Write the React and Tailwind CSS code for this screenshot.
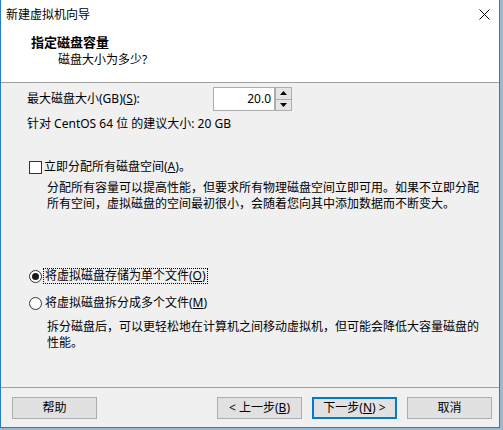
import React from "react"

const font = { fontFamily: '"Noto Sans", "Noto Sans CJK SC", sans-serif' }

function Button({ children, primary }) {
  return (
    <button
      className={
        primary
          ? "w-[85px] h-[22px] bg-[#e1e1e1] border-2 border-[#0078d7] text-[12px] leading-none text-black flex items-center justify-center"
          : "w-[85px] h-[22px] bg-[#e1e1e1] border border-[#adadad] text-[12px] leading-none text-black flex items-center justify-center"
      }
    >
      {children}
    </button>
  )
}

function Spinner() {
  return (
    <div className="flex flex-col w-[17px] h-[24px] border border-[#adadad] bg-white">
      <div className="flex-1 bg-[#e5e5e5] border-b border-[#adadad] flex items-center justify-center">
        <svg width="7" height="4" viewBox="0 0 7 4">
          <path d="M0 4 L3.5 0 L7 4 Z" fill="#000" />
        </svg>
      </div>
      <div className="flex-1 bg-[#e5e5e5] flex items-center justify-center">
        <svg width="7" height="4" viewBox="0 0 7 4">
          <path d="M0 0 L3.5 4 L7 0 Z" fill="#000" />
        </svg>
      </div>
    </div>
  )
}

export default function App() {
  return (
    <div className="w-[503px] h-[430px] bg-[#9db8cc] overflow-hidden" style={font}>
      <div className="w-[500px] h-[428px] bg-[#f0f0f0] border-x border-b border-[#1e7fd6] flex flex-col text-black">
        {/* title bar */}
        <div className="h-[30px] bg-white flex items-center justify-between pl-[5px] pr-[8px]">
          <span className="text-[12px] leading-4">新建虚拟机向导</span>
          <svg width="11" height="11" viewBox="0 0 11 11" className="mr-[1px] mb-[2px]">
            <path d="M0.5 0.5 L10.5 10.5 M10.5 0.5 L0.5 10.5" stroke="#000" strokeWidth="1" />
          </svg>
        </div>

        {/* header */}
        <div className="h-[53px] bg-white border-b border-[#a0a0a0] pt-[4px]">
          <div className="pl-[30px] text-[13px] leading-4 font-bold">指定磁盘容量</div>
          <div className="pl-[57px] mt-[2px] text-[12px] leading-4">磁盘大小为多少?</div>
        </div>

        {/* body */}
        <div className="flex-1 pl-[26px] text-[12px]">
          <div className="mt-[4px] flex items-center h-[24px]">
            <div className="w-[186px] leading-4">
              最大磁盘大小(GB)(<u>S</u>):
            </div>
            <div className="w-[62px] h-[24px] bg-white border border-[#adadad] flex items-center justify-end pr-[3px] leading-4">
              20.0
            </div>
            <Spinner />
          </div>

          <div className="mt-[5px] leading-4">针对 CentOS 64 位 的建议大小: 20 GB</div>

          <div className="mt-[27px] flex items-center h-4 ml-[2px]">
            <div className="w-[13px] h-[13px] bg-white border border-[#333]" />
            <span className="ml-[2px] leading-4">
              立即分配所有磁盘空间(<u>A</u>)。
            </span>
          </div>

          <div className="mt-[5px] ml-[20px] leading-4">
            分配所有容量可以提高性能，但要求所有物理磁盘空间立即可用。如果不立即分配
            <br />
            所有空间，虚拟磁盘的空间最初很小，会随着您向其中添加数据而不断变大。
          </div>

          <div className="mt-[56px] flex items-center h-4 ml-[2px]">
            <div className="w-[13px] h-[13px] rounded-full bg-white border border-[#333] flex items-center justify-center">
              <div className="w-[7px] h-[7px] rounded-full bg-[#1a1a1a]" />
            </div>
            <span className="ml-[1px] px-[1px] leading-[14px] border border-dotted border-black">
              将虚拟磁盘存储为单个文件(<u>O</u>)
            </span>
          </div>

          <div className="mt-[11px] flex items-center h-4 ml-[2px]">
            <div className="w-[13px] h-[13px] rounded-full bg-white border border-[#333]" />
            <span className="ml-[3px] leading-4">
              将虚拟磁盘拆分成多个文件(<u>M</u>)
            </span>
          </div>

          <div className="mt-[8px] ml-[20px] leading-4">
            拆分磁盘后，可以更轻松地在计算机之间移动虚拟机，但可能会降低大容量磁盘的
            <br />
            性能。
          </div>
        </div>

        {/* footer */}
        <div className="h-[40px] border-t border-[#a0a0a0] pt-[9px] pl-[11px] pr-[7px] flex items-start">
          <Button>帮助</Button>
          <div className="flex-1" />
          <div className="flex gap-[10px]">
            <Button>
              &lt; 上一步(<u>B</u>)
            </Button>
            <Button primary>
              下一步(<u>N</u>) &gt;
            </Button>
            <Button>取消</Button>
          </div>
        </div>
      </div>
    </div>
  )
}
